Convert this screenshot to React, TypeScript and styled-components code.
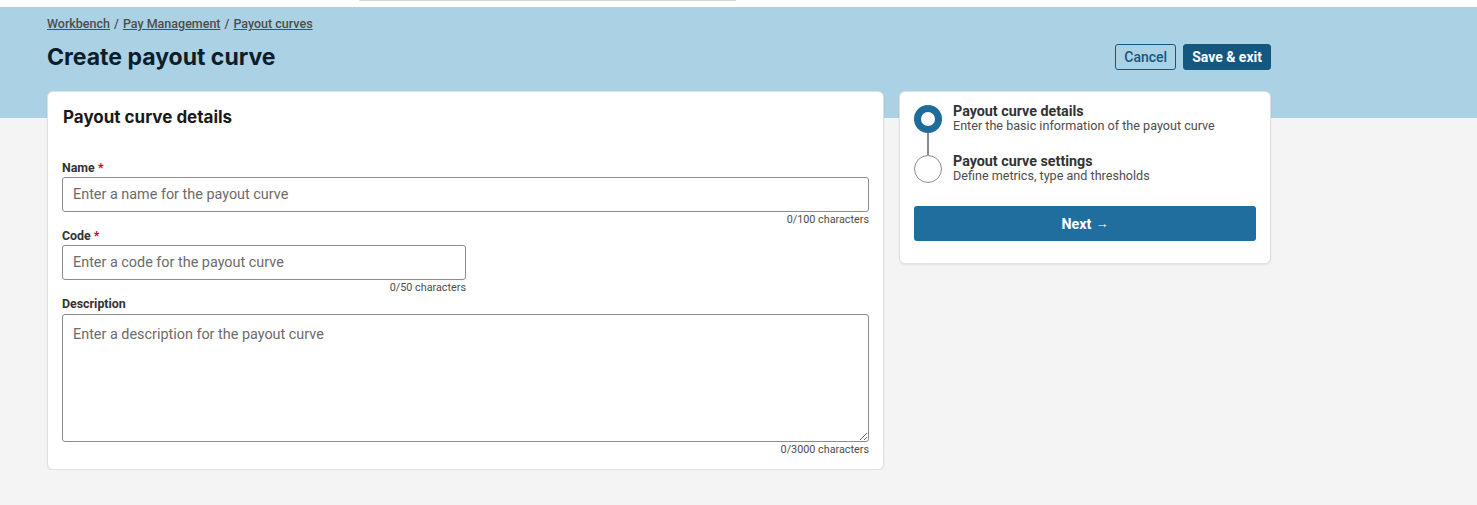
import React from "react";
import styled, { createGlobalStyle } from "styled-components";

const Global = createGlobalStyle`
  html, body { margin: 0; padding: 0; background: #f4f4f4; }
  body { font-family: Roboto, "Liberation Sans", sans-serif; color: #333; }
  * { box-sizing: border-box; }
`;

const TopStrip = styled.div`
  height: 7px;
  background: #fff;
`;
const TopBar = styled.div`
  margin-left: 359px;
  width: 377px;
  height: 1px;
  background: #d6d6d6;
  border-radius: 0 0 2px 2px;
`;

const Banner = styled.div`
  background: #abd1e5;
  height: 111px;
`;

const Page = styled.div`
  width: 1224px;
  margin-left: 47px;
`;

const Header = styled.div`
  padding-top: 9px;
`;

const Breadcrumb = styled.nav`
  font-size: 12.5px;
  font-weight: 500;
  color: #4d4d4d;
  line-height: 15px;
  display: flex;
  gap: 4px;
  a { color: #4d4d4d; text-decoration: underline; }
`;

const TitleRow = styled.div`
  display: flex;
  align-items: center;
  justify-content: space-between;
  margin-top: 13px;
  height: 26px;
`;

const Title = styled.h1`
  margin: 0;
  font-family: Inter, "Open Sans", sans-serif;
  font-size: 23px;
  font-weight: 700;
  color: #0c1e2b;
`;

const Actions = styled.div`
  display: flex;
  gap: 7px;
`;

const Button = styled.button<{ $primary?: boolean }>`
  height: 26px;
  padding: 0 8px;
  font-family: Roboto, sans-serif;
  font-size: 14px;
  border-radius: 3px;
  border: 1px solid #15587f;
  background: ${(p) => (p.$primary ? "#15587f" : "transparent")};
  color: ${(p) => (p.$primary ? "#fff" : "#15587f")};
  font-weight: ${(p) => (p.$primary ? 700 : 500)};
`;

const Grid = styled.div`
  display: grid;
  grid-template-columns: 837px 372px;
  gap: 15px;
  margin-top: -27px;
  align-items: start;
`;

const Card = styled.section<{ $pad: string }>`
  background: #fff;
  border: 1px solid #e0e0e0;
  border-radius: 6px;
  box-shadow: 0 1px 2px rgba(0, 0, 0, 0.08);
  padding: ${(p) => p.$pad};
`;

const CardTitle = styled.h2`
  margin: 0 0 33px 1px;
  font-family: Inter, "Open Sans", sans-serif;
  font-size: 17px;
  font-weight: 700;
  color: #1a1a1a;
  line-height: 22px;
`;

const Field = styled.div<{ $width?: string }>`
  display: flex;
  flex-direction: column;
  width: ${(p) => p.$width || "100%"};
  margin-bottom: 3px;
  &:last-child { margin-bottom: 0; }
`;

const Label = styled.label`
  font-size: 12.4px;
  font-weight: 700;
  color: #333;
  line-height: 14px;
  margin-bottom: 2px;
  span { color: #d0021b; }
`;

const Input = styled.input`
  height: 35px;
  border: 1px solid #8c8c8c;
  border-radius: 3px;
  padding: 0 10px;
  font-family: Roboto, sans-serif;
  font-size: 14.4px;
  color: #333;
  &::placeholder { color: #6b6b6b; }
`;

const TextArea = styled.textarea`
  height: 128px;
  margin-top: 1px;
  border: 1px solid #8c8c8c;
  border-radius: 3px;
  padding: 11px 10px;
  font-family: Roboto, sans-serif;
  font-size: 14.4px;
  color: #333;
  resize: vertical;
  &::placeholder { color: #6b6b6b; }
`;

const Helper = styled.div`
  font-size: 10.8px;
  color: #4d4d4d;
  text-align: right;
  line-height: 13px;
  margin-top: 1px;
`;

const Steps = styled.ol`
  list-style: none;
  margin: 0;
  padding: 0;
`;

const Step = styled.li`
  display: grid;
  grid-template-columns: 28px 1fr;
  column-gap: 11px;
  height: 50px;
  position: relative;
`;

const Dot = styled.div<{ $active?: boolean }>`
  width: 28px;
  height: 28px;
  border-radius: 50%;
  background: #fff;
  border: ${(p) => (p.$active ? "7px solid #1d6c9c" : "1px solid #8c8c8c")};
`;

const Connector = styled.div`
  position: absolute;
  left: 13px;
  top: 28px;
  width: 2px;
  height: 22px;
  background: #8c8c8c;
`;

const StepBody = styled.div`
  margin-top: -2px;
`;

const StepTitle = styled.div`
  font-size: 14.3px;
  font-weight: 700;
  color: #333;
  line-height: 16px;
`;

const StepText = styled.div`
  font-size: 12.6px;
  color: #4d4d4d;
  line-height: 14px;
`;

const NextButton = styled.button`
  width: 100%;
  height: 35px;
  margin-top: 1px;
  background: #1f6e9e;
  color: #fff;
  border: none;
  border-radius: 3px;
  font-family: Roboto, sans-serif;
  font-size: 14.3px;
  font-weight: 700;
  display: flex;
  align-items: center;
  justify-content: center;
  gap: 4px;
  span { font-weight: 400; font-size: 13px; }
`;

export default function App() {
  return (
    <>
      <Global />
      <TopStrip>
        <TopBar />
      </TopStrip>
      <Banner>
        <Page>
          <Header>
            <Breadcrumb>
              <a>Workbench</a>/<a>Pay Management</a>/<a>Payout curves</a>
            </Breadcrumb>
            <TitleRow>
              <Title>Create payout curve</Title>
              <Actions>
                <Button>Cancel</Button>
                <Button $primary>Save &amp; exit</Button>
              </Actions>
            </TitleRow>
          </Header>
        </Page>
      </Banner>
      <Page>
        <Grid>
          <Card $pad="14px 14px 13px">
            <CardTitle>Payout curve details</CardTitle>
            <Field>
              <Label>
                Name <span>*</span>
              </Label>
              <Input placeholder="Enter a name for the payout curve" />
              <Helper>0/100 characters</Helper>
            </Field>
            <Field $width="404px">
              <Label>
                Code <span>*</span>
              </Label>
              <Input placeholder="Enter a code for the payout curve" />
              <Helper>0/50 characters</Helper>
            </Field>
            <Field>
              <Label>Description</Label>
              <TextArea placeholder="Enter a description for the payout curve" />
              <Helper>0/3000 characters</Helper>
            </Field>
          </Card>
          <Card $pad="13px 14px 22px">
            <Steps>
              <Step>
                <Dot $active />
                <Connector />
                <StepBody>
                  <StepTitle>Payout curve details</StepTitle>
                  <StepText>Enter the basic information of the payout curve</StepText>
                </StepBody>
              </Step>
              <Step>
                <Dot />
                <StepBody>
                  <StepTitle>Payout curve settings</StepTitle>
                  <StepText>Define metrics, type and thresholds</StepText>
                </StepBody>
              </Step>
            </Steps>
            <NextButton>
              Next <span>→</span>
            </NextButton>
          </Card>
        </Grid>
      </Page>
    </>
  );
}
